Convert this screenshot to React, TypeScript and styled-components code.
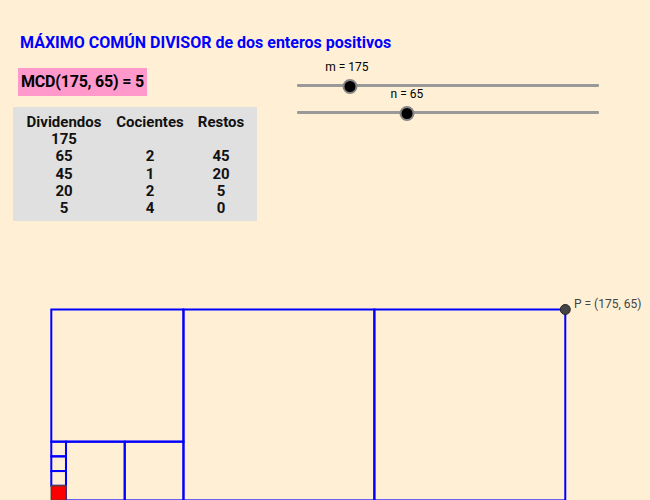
import React from "react"
import styled, { createGlobalStyle } from "styled-components"

const GlobalStyle = createGlobalStyle`
  html, body {
    margin: 0;
    padding: 0;
    background: #ffefd5;
  }
  body {
    font-family: Roboto, "Liberation Sans", sans-serif;
  }
`

const Page = styled.div`
  width: 650px;
  height: 500px;
  overflow: hidden;
  background: #ffefd5;
  display: flex;
  flex-direction: column;
`

const Title = styled.h1`
  margin: 33px 0 0 20px;
  font-size: 16px;
  line-height: 19px;
  font-weight: 700;
  color: #0000ff;
`

const Top = styled.div`
  display: flex;
  margin-top: 8px;
`

const LeftCol = styled.div`
  display: flex;
  flex-direction: column;
  align-items: flex-start;
  margin-left: 13px;
  width: 284px;
`

const Result = styled.div`
  margin: 8px 0 0 5px;
  width: 129px;
  height: 28px;
  box-sizing: border-box;
  padding-left: 3px;
  background: #ff99cc;
  font-size: 16px;
  font-weight: 700;
  line-height: 28px;
  letter-spacing: -0.2px;
  white-space: nowrap;
  color: #000;
`

const Table = styled.div`
  margin-top: 11px;
  width: 244px;
  height: 114px;
  box-sizing: border-box;
  padding: 7px 0 0 13px;
  background: #e0e0e0;
  display: grid;
  grid-template-columns: 76px 70px 46px;
  column-gap: 13px;
  grid-auto-rows: 17.2px;
  justify-items: center;
  font-family: Roboto, "Liberation Sans", sans-serif;
  font-weight: 700;
  font-size: 15px;
  line-height: 17px;
  color: #111;
`

const Cell = styled.span`
  white-space: nowrap;
`

const Sliders = styled.div`
  display: flex;
  flex-direction: column;
  width: 302px;
`

const SliderBox = styled.div`
  display: flex;
  flex-direction: column;
  height: 27px;
`

const SliderLabel = styled.div`
  position: relative;
  height: 14px;
  font-size: 12px;
  line-height: 14px;
  color: #000;
`

const LabelText = styled.span`
  position: absolute;
  top: 0;
  transform: translateX(-50%);
  white-space: nowrap;
`

const Track = styled.div`
  position: relative;
  height: 13px;
  display: flex;
  align-items: flex-end;
`

const Line = styled.div`
  width: 100%;
  height: 3px;
  background: #999;
  border-radius: 1px;
`

const Knob = styled.span`
  position: absolute;
  bottom: -6.5px;
  width: 11px;
  height: 11px;
  border-radius: 50%;
  background: #000;
  border: 2.5px solid #858585;
  transform: translateX(-50%);
`

const Drawing = styled.svg`
  display: block;
  flex: none;
`

const Slider: React.FC<{ name: string; value: number; fraction: number; labelShift?: number }> = ({
  name,
  value,
  fraction,
  labelShift = 0,
}) => (
  <SliderBox>
    <SliderLabel>
      <LabelText style={{ left: fraction * 302 + labelShift }}>
        {name} = {value}
      </LabelText>
    </SliderLabel>
    <Track>
      <Line />
      <Knob style={{ left: fraction * 302 }} />
    </Track>
  </SliderBox>
)

type Square = { x: number; y: number; s: number }

// Euclid's algorithm drawn as squares cut from the m x n rectangle
const squares = (a: number, b: number): Square[] => {
  const out: Square[] = []
  let x = 0
  let y = 0
  let w = a
  let h = b
  while (w > 0 && h > 0) {
    if (w >= h) {
      out.push({ x: x + w - h, y, s: h })
      w -= h
    } else {
      out.push({ x, y, s: w })
      y += w
      h -= w
    }
  }
  return out
}

const rows = [
  ["175", "", ""],
  ["65", "2", "45"],
  ["45", "1", "20"],
  ["20", "2", "5"],
  ["5", "4", "0"],
]

export default function App() {
  const m = 175
  const n = 65
  const x0 = 51.3
  const y0 = 309.5
  const k = 2.937
  const sq = squares(m, n)
  const px = x0 + m * k

  return (
    <Page>
      <GlobalStyle />
      <Title>MÁXIMO COMÚN DIVISOR de dos enteros positivos</Title>
      <Top>
        <LeftCol>
          <Result>MCD(175, 65) = 5</Result>
          <Table>
            <Cell>Dividendos</Cell>
            <Cell>Cocientes</Cell>
            <Cell>Restos</Cell>
            {rows.map((r, i) => r.map((c, j) => <Cell key={`${i}-${j}`}>{c}</Cell>))}
          </Table>
        </LeftCol>
        <Sliders>
          <Slider name="m" value={m} fraction={0.175} labelShift={-3} />
          <Slider name="n" value={n} fraction={0.364} />
        </Sliders>
      </Top>
      <Drawing width={650} height={279} viewBox="0 221 650 279">
        {sq.map((q, i) => {
          const last = i === sq.length - 1
          return (
            <rect
              key={i}
              x={x0 + q.x * k}
              y={y0 + q.y * k}
              width={q.s * k}
              height={q.s * k}
              fill={last ? "#ff0000" : "none"}
              stroke={last ? "#5a3a3a" : "#0000ff"}
              strokeWidth={last ? 1.5 : 2}
            />
          )
        })}
        <circle cx={px} cy={y0} r={5} fill="#444" stroke="#222" strokeWidth={1} />
        <text x={574} y={308} fontFamily="Roboto, 'Liberation Sans', sans-serif" fontSize={12} fill="#444">
          P = (175, 65)
        </text>
      </Drawing>
    </Page>
  )
}
